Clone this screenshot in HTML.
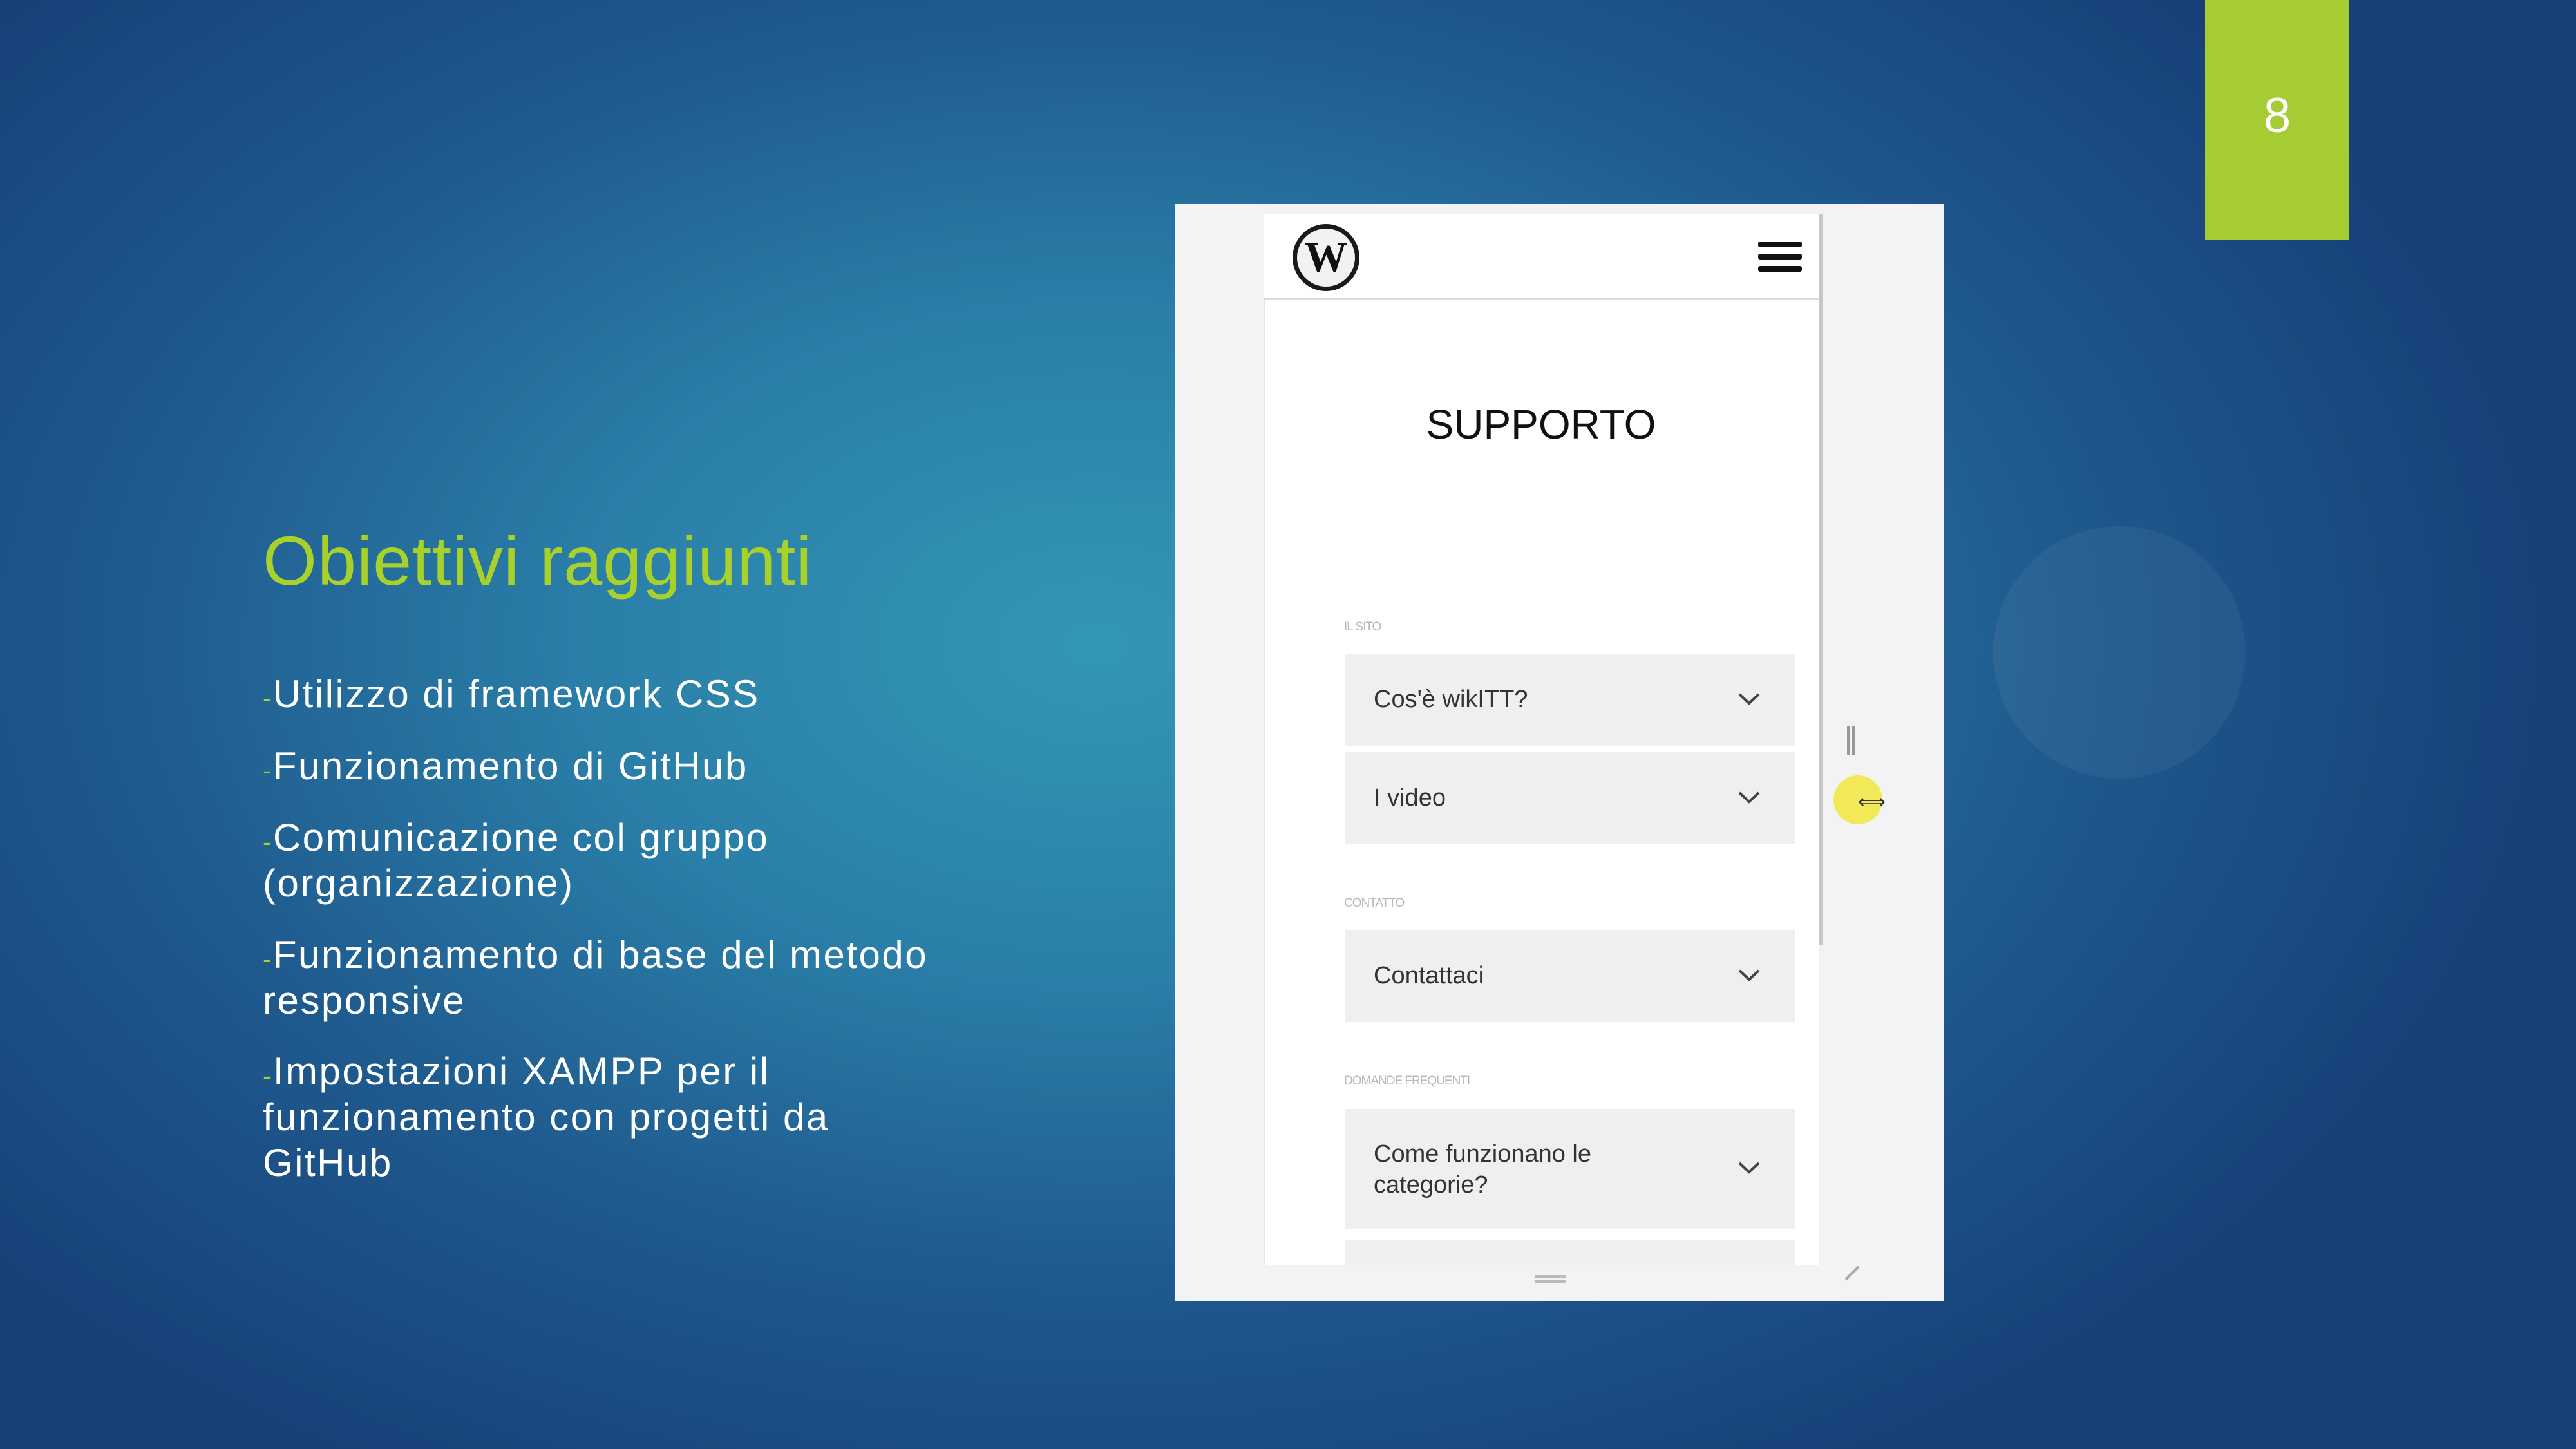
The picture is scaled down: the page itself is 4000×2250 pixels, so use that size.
<!DOCTYPE html>
<html><head><meta charset="utf-8"><style>
*{margin:0;padding:0;box-sizing:border-box}
body{width:4000px;height:2250px;overflow:hidden;position:relative;font-family:"Century Gothic","URW Gothic","Liberation Sans",sans-serif;
background:radial-gradient(ellipse 2300px 1500px at 1700px 1000px,#3398b3 0%,#2a7ea8 35%,#1f5a8e 65%,#173f78 100%);}
.abs{position:absolute}
.tab{left:3424px;top:0;width:224px;height:372px;background:#a6cc34;color:#fff;font-size:76px;text-align:center;line-height:360px}
.circ{left:3095px;top:817px;width:392px;height:392px;border-radius:50%;background:rgba(255,255,255,0.05)}
h1{position:absolute;left:408px;top:808px;font-weight:normal;font-size:108px;color:#a8d12c;letter-spacing:1px}
.b{position:absolute;left:408px;color:#fff;font-size:60px;line-height:71px;letter-spacing:2.5px}
.b span{color:#a8d12c;font-size:40px;line-height:0;vertical-align:baseline}
.shot{left:1824px;top:316px;width:1194px;height:1704px;background:#f3f3f5}
.page{left:1962px;top:332px;width:862px;height:1632px;background:#fff;border-left:3px solid #e6e6e8}
.hdr{left:1962px;top:332px;width:862px;height:134px;border-bottom:4px solid #dcdcde;background:#fff}
.acc{position:absolute;left:2089px;width:699px;background:#efeff1;font-family:"Liberation Sans",sans-serif;font-size:38px;color:#333;padding-left:44px}
.acc svg{position:absolute;right:54px;top:50%;margin-top:-14px}
.lbl{position:absolute;left:2087px;font-family:"Liberation Sans",sans-serif;font-size:19px;color:#b8b8bc;letter-spacing:-1px}
</style></head><body>
<div class="abs circ"></div>
<div class="abs tab">8</div>
<h1>Obiettivi raggiunti</h1>
<div class="b" style="top:1042px"><span>-</span>Utilizzo di framework CSS</div>
<div class="b" style="top:1154px"><span>-</span>Funzionamento di GitHub</div>
<div class="b" style="top:1265px"><span>-</span>Comunicazione col gruppo<br>(organizzazione)</div>
<div class="b" style="top:1447px"><span>-</span>Funzionamento di base del metodo<br>responsive</div>
<div class="b" style="top:1628px"><span>-</span>Impostazioni XAMPP per il<br>funzionamento con progetti da<br>GitHub</div>

<div class="abs shot"></div>
<div class="abs page"></div>
<div class="abs hdr"></div>
<div class="abs" style="left:2007px;top:348px;width:104px;height:104px;border-radius:50%;border:7px solid #1a1a1a;background:#f2f2f2;text-align:center;font-family:'Liberation Serif',serif;font-weight:bold;font-size:66px;line-height:90px;color:#111">W</div>
<div class="abs" style="left:2730px;top:375px;width:68px;height:9px;background:#111;border-radius:3px"></div>
<div class="abs" style="left:2730px;top:394px;width:68px;height:9px;background:#111;border-radius:3px"></div>
<div class="abs" style="left:2730px;top:413px;width:68px;height:9px;background:#111;border-radius:3px"></div>
<div class="abs" style="left:2824px;top:332px;width:6px;height:1135px;background:#c8c8ca"></div>
<div class="abs" style="left:1962px;top:622px;width:862px;text-align:center;font-family:'Liberation Sans',sans-serif;font-size:64px;color:#111">SUPPORTO</div>

<div class="lbl" style="top:963px">IL SITO</div>
<div class="acc" style="top:1015px;height:143px;line-height:143px">Cos'è wikITT?<svg width="36" height="24" viewBox="0 0 36 24"><path d="M3 5 L18 19 L33 5" fill="none" stroke="#444" stroke-width="4"/></svg></div>
<div class="acc" style="top:1168px;height:143px;line-height:143px">I video<svg width="36" height="24" viewBox="0 0 36 24"><path d="M3 5 L18 19 L33 5" fill="none" stroke="#444" stroke-width="4"/></svg></div>
<div class="lbl" style="top:1392px">CONTATTO</div>
<div class="acc" style="top:1444px;height:143px;line-height:143px">Contattaci<svg width="36" height="24" viewBox="0 0 36 24"><path d="M3 5 L18 19 L33 5" fill="none" stroke="#444" stroke-width="4"/></svg></div>
<div class="lbl" style="top:1668px">DOMANDE FREQUENTI</div>
<div class="acc" style="top:1722px;height:186px;line-height:48px;padding-top:46px">Come funzionano le<br>categorie?<svg width="36" height="24" viewBox="0 0 36 24"><path d="M3 5 L18 19 L33 5" fill="none" stroke="#444" stroke-width="4"/></svg></div>
<div class="acc" style="top:1926px;height:38px"></div>

<div class="abs" style="left:2868px;top:1128px;width:4px;height:44px;background:#999;box-shadow:8px 0 0 #999"></div>
<div class="abs" style="left:2847px;top:1204px;width:76px;height:76px;border-radius:50%;background:rgba(240,230,60,0.85)"></div>
<div class="abs" style="left:2885px;top:1228px;font-family:'DejaVu Sans',sans-serif;font-size:30px;color:#333">⟺</div>
<div class="abs" style="left:2384px;top:1980px;width:48px;height:4px;background:#bbb;box-shadow:0 8px 0 #bbb"></div>
<div class="abs" style="left:2862px;top:1975px;width:28px;height:4px;background:#aaa;transform:rotate(-45deg)"></div>
</body></html>
